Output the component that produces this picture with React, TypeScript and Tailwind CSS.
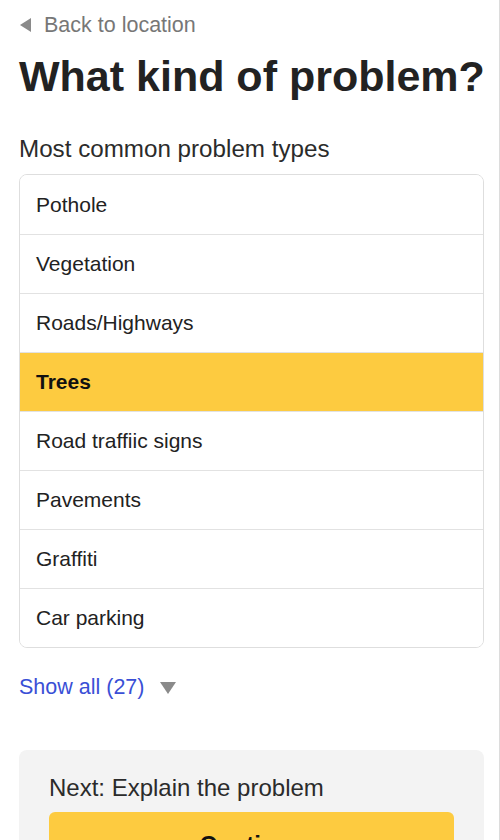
const commonTypes = [
  "Pothole",
  "Vegetation",
  "Roads/Highways",
  "Trees",
  "Road traffiic signs",
  "Pavements",
  "Graffiti",
  "Car parking",
];

export default function App() {
  const selected = "Trees";

  return (
    <div
      className="h-[840px] w-[500px] overflow-hidden bg-white border-r border-[#dcdcdc] text-[#222]"
      style={{ fontFamily: "'Liberation Sans', Arial, sans-serif" }}
    >
      <div className="pl-[19px] pr-[15px]">
        {/* Back link */}
        <a className="flex items-center gap-[13px] pt-[12px] text-[21.5px] leading-[26px] text-[#777]">
          <span className="ml-[1px] h-0 w-0 border-y-[7px] border-r-[11px] border-y-transparent border-r-[#8a8a8a]" />
          Back to location
        </a>

        <h1 className="mt-[14px] whitespace-nowrap text-[43px] font-bold leading-[48px] text-[#222]">
          What kind of problem?
        </h1>

        <p className="mt-[34px] text-[24.2px] leading-[30px] text-[#2b2b2b]">Most common problem types</p>

        {/* Problem list */}
        <ul className="mt-[10px] overflow-hidden rounded-[8px] border border-[#dedede]">
          {commonTypes.map((t, i) => (
            <li
              key={t}
              className={
                (i > 0 ? "border-t border-[#e2e2e2] " : "") +
                (t === selected
                  ? "bg-[#fdcb40] font-bold text-[#111] "
                  : "bg-white text-[#222] ") +
                "flex h-[59px] items-center pl-[16px] text-[21px]"
              }
            >
              {t}
            </li>
          ))}
        </ul>

        <a className="mt-[26px] flex items-center gap-[16px] text-[21.5px] leading-[26px] text-[#3a4fd6]">
          Show all (27)
          <span className="mt-[1px] h-0 w-0 border-x-[8px] border-t-[12px] border-x-transparent border-t-[#8a8a8a]" />
        </a>

        {/* Next step */}
        <div className="mt-[50px] rounded-[8px] bg-[#f3f3f3] px-[30px] pt-[25px] pb-[30px]">
          <p className="text-[24px] leading-[26px] text-[#2b2b2b]">Next: Explain the problem</p>
          <button className="mt-[11px] flex h-[66px] w-full items-center justify-center rounded-[6px] bg-[#fdcb40] text-[24px] font-bold text-[#111]">
            Continue
          </button>
        </div>
      </div>
    </div>
  );
}
